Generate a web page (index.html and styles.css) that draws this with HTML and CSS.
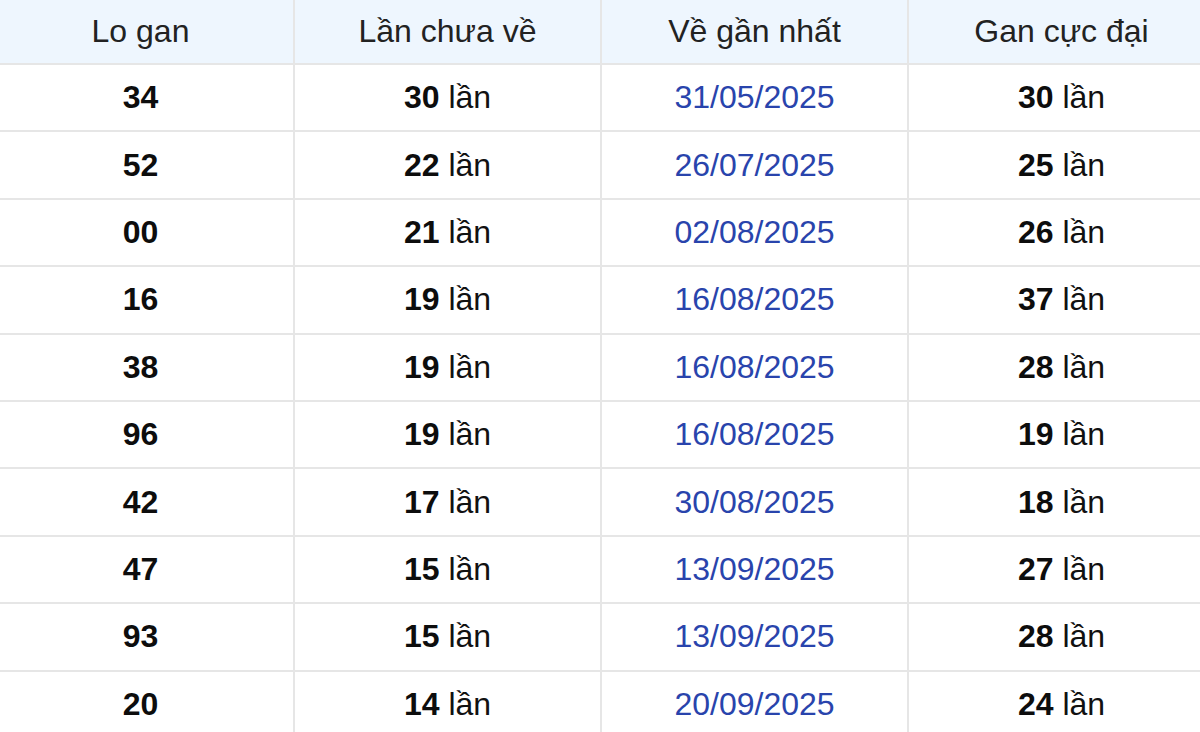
FILE: index.html
```html
<!DOCTYPE html>
<html lang="vi">
<head>
<meta charset="utf-8">
<title>Lo gan</title>
<link rel="stylesheet" href="styles.css">
</head>
<body>
<table class="gan-table">
  <thead>
    <tr>
      <th>Lo gan</th>
      <th>Lần chưa về</th>
      <th>Về gần nhất</th>
      <th>Gan cực đại</th>
    </tr>
  </thead>
  <tbody>
    <tr><td><b>34</b></td><td><b>30</b> lần</td><td class="date">31/05/2025</td><td><b>30</b> lần</td></tr>
    <tr><td><b>52</b></td><td><b>22</b> lần</td><td class="date">26/07/2025</td><td><b>25</b> lần</td></tr>
    <tr><td><b>00</b></td><td><b>21</b> lần</td><td class="date">02/08/2025</td><td><b>26</b> lần</td></tr>
    <tr><td><b>16</b></td><td><b>19</b> lần</td><td class="date">16/08/2025</td><td><b>37</b> lần</td></tr>
    <tr><td><b>38</b></td><td><b>19</b> lần</td><td class="date">16/08/2025</td><td><b>28</b> lần</td></tr>
    <tr><td><b>96</b></td><td><b>19</b> lần</td><td class="date">16/08/2025</td><td><b>19</b> lần</td></tr>
    <tr><td><b>42</b></td><td><b>17</b> lần</td><td class="date">30/08/2025</td><td><b>18</b> lần</td></tr>
    <tr><td><b>47</b></td><td><b>15</b> lần</td><td class="date">13/09/2025</td><td><b>27</b> lần</td></tr>
    <tr><td><b>93</b></td><td><b>15</b> lần</td><td class="date">13/09/2025</td><td><b>28</b> lần</td></tr>
    <tr><td><b>20</b></td><td><b>14</b> lần</td><td class="date">20/09/2025</td><td><b>24</b> lần</td></tr>
  </tbody>
</table>
</body>
</html>
```

FILE: styles.css
```css
html, body {
  margin: 0;
  padding: 0;
  background: #ffffff;
  overflow: hidden;
}

body {
  width: 1200px;
  height: 732px;
  font-family: "Liberation Sans", Arial, sans-serif;
}

.gan-table {
  border-collapse: collapse;
  table-layout: fixed;
  width: 1230px;
  margin-left: -14px;
  font-size: 32px;
  color: #111111;
}

.gan-table th,
.gan-table td {
  border: 2px solid #e6e6e6;
  text-align: center;
  padding: 0;
  vertical-align: middle;
}

.gan-table th {
  background: #eef6fe;
  font-weight: normal;
  color: #222222;
  height: 63px;
  border-top: none;
}

.gan-table td {
  height: 65.4px;
}

.gan-table b {
  font-weight: bold;
  color: #0d0d0d;
}

.gan-table .date {
  color: #2944ac;
}
```
